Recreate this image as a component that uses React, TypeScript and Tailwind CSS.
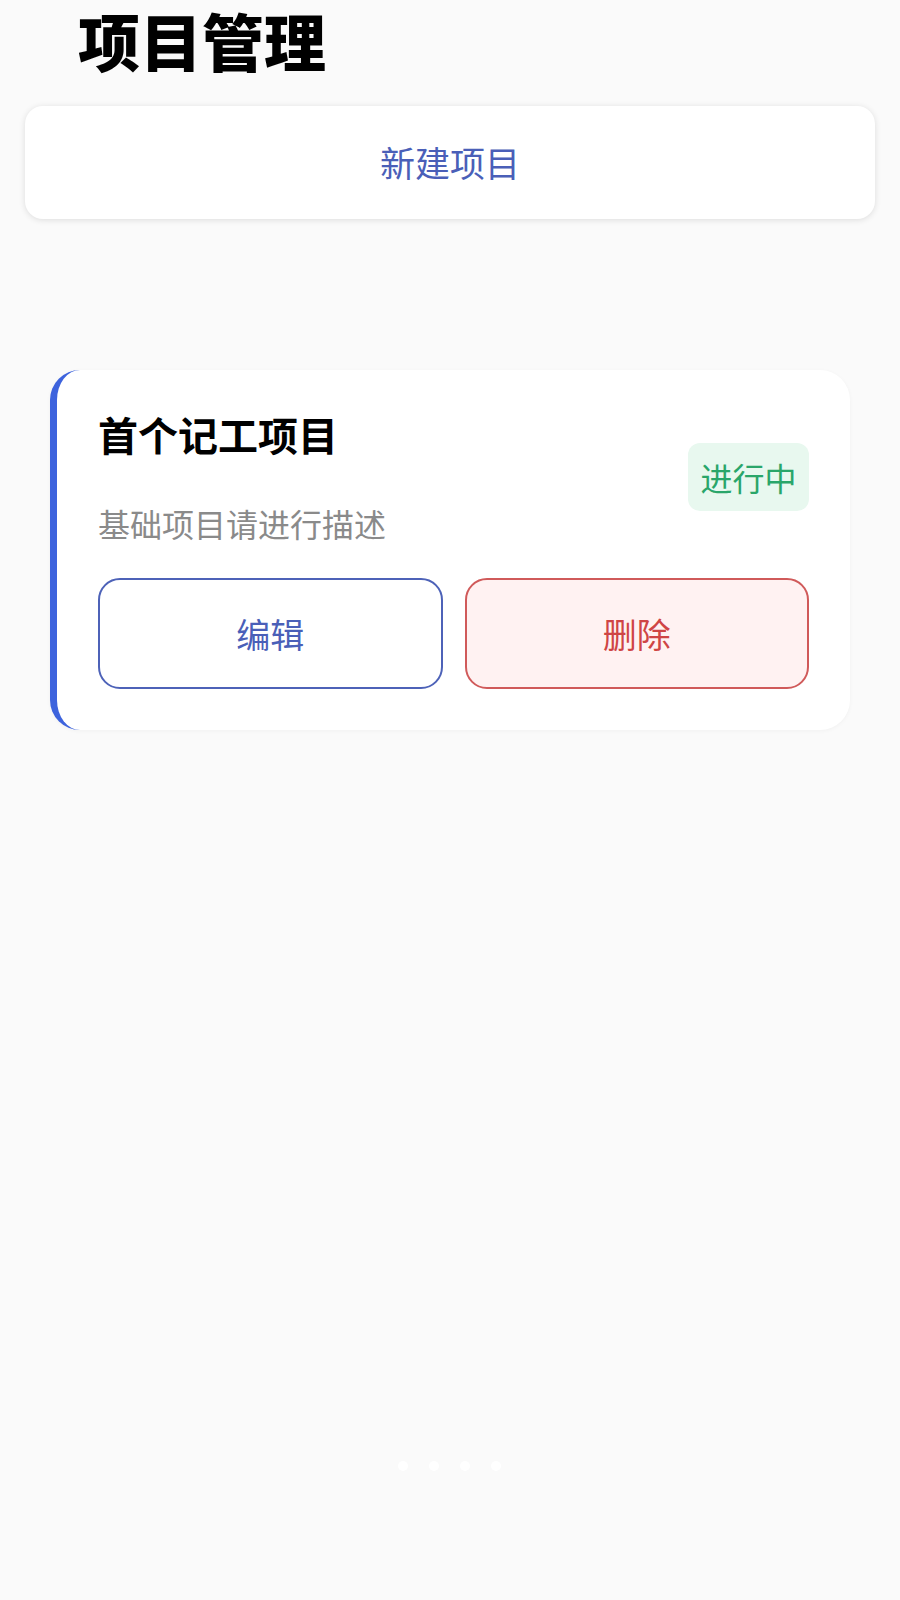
export default function App() {
  return (
    <div
      className="relative min-h-[1600px] w-[900px] bg-[#fafafa]"
      style={{ fontFamily: '"Noto Sans CJK SC", "Noto Sans", sans-serif' }}
    >
      <div className="px-[78px] pt-[5px]">
        <h1 className="text-[62px] leading-[70px] font-black text-black">项目管理</h1>
      </div>

      <div className="mx-[25px] mt-[31px] flex h-[113px] items-center justify-center rounded-[18px] bg-white shadow-[0_1px_6px_rgba(0,0,0,0.12)]">
        <span className="text-[35px] text-[#4a5fb8]">新建项目</span>
      </div>

      <div className="mt-[151px] ml-[50px] mr-[50px] rounded-[30px] border-l-[7px] border-[#3d63dd] bg-white pt-[40px] pr-[41px] pb-[41px] pl-[41px] shadow-[0_1px_4px_rgba(0,0,0,0.04)]">
        <div className="flex items-center justify-between">
          <div className="flex flex-col">
            <div className="text-[40px] leading-[48px] font-bold text-black">首个记工项目</div>
            <div className="mt-[45px] text-[32px] leading-[40px] text-[#8a8a8a]">基础项目请进行描述</div>
          </div>
          <div className="flex h-[68px] w-[121px] items-center justify-center rounded-[12px] bg-[#e8f8ef] text-[32px] text-[#2aa66a]">
            进行中
          </div>
        </div>
        <div className="mt-[35px] flex gap-[22px]">
          <button className="flex h-[111px] flex-1 items-center justify-center rounded-[22px] border-2 border-[#4d62b8] bg-white text-[34px] text-[#4a5fb8]">
            编辑
          </button>
          <button className="flex h-[111px] flex-1 items-center justify-center rounded-[22px] border-2 border-[#d05a5a] bg-[#fff2f2] text-[34px] text-[#cf4545]">
            删除
          </button>
        </div>
      </div>

      <div className="absolute top-[1461px] left-[398px] flex gap-[21px]">
        <span className="h-[10px] w-[10px] rounded-full bg-white" />
        <span className="h-[10px] w-[10px] rounded-full bg-white" />
        <span className="h-[10px] w-[10px] rounded-full bg-white" />
        <span className="h-[10px] w-[10px] rounded-full bg-white" />
      </div>
    </div>
  )
}
